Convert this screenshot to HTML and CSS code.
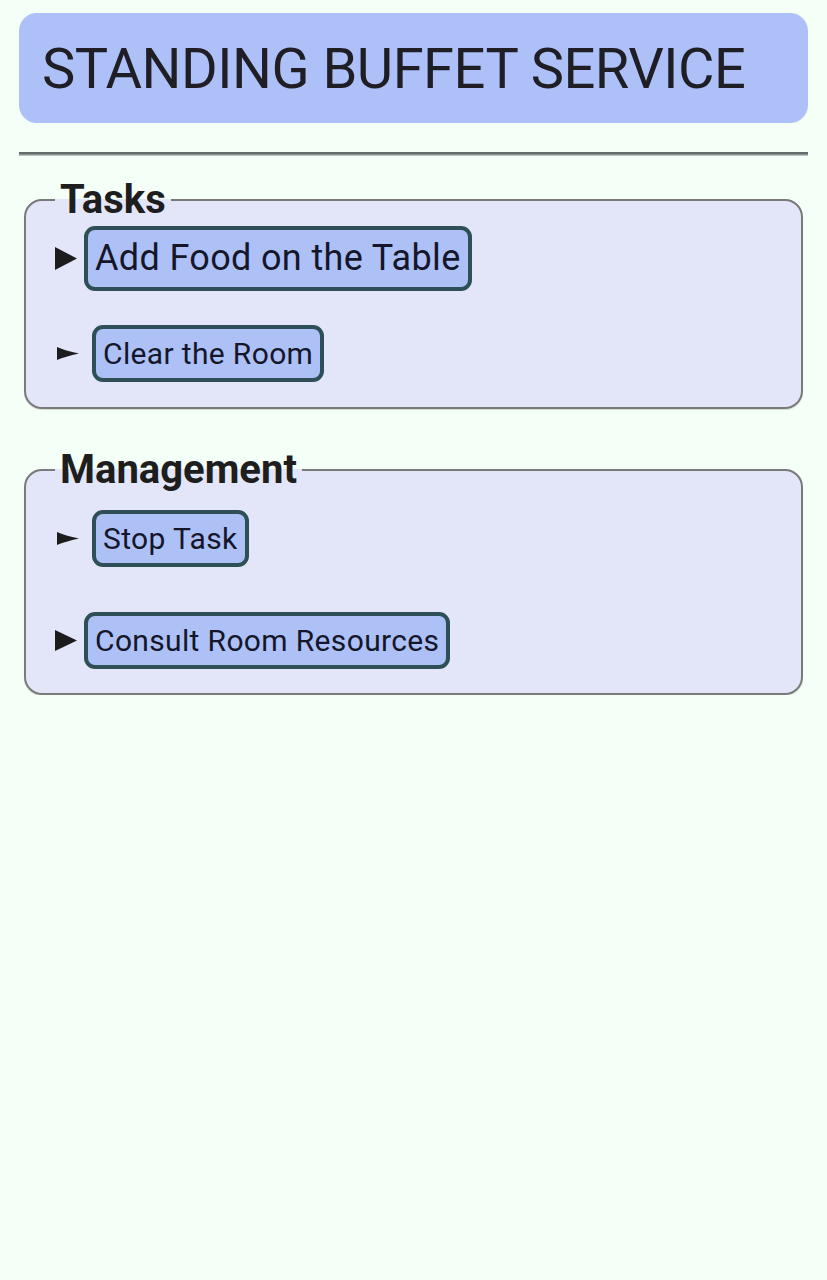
FILE: index.html
```html
<!DOCTYPE html>
<html lang="en">
<head>
<meta charset="utf-8">
<title>Standing Buffet Service</title>
<link rel="stylesheet" href="styles.css">
</head>
<body>
<header class="title-bar">
  <h1 class="title">STANDING BUFFET SERVICE</h1>
</header>
<div class="rule"></div>

<fieldset class="group group-tasks">
  <legend class="group-legend">Tasks</legend>
  <div class="item item-first-tasks">
    <svg class="marker marker-big" width="22" height="23" viewBox="0 0 22 23"><polygon points="0,0 22,11.5 0,23" fill="#1c1c1c"/></svg>
    <button class="action action-large">Add Food on the Table</button>
  </div>
  <div class="item item-second-tasks">
    <svg class="marker marker-small" width="22" height="13" viewBox="0 0 22 13"><path d="M0 0 Q8 3.5 22 6.5 Q8 9.5 0 13 Z" fill="#1c1c1c"/></svg>
    <button class="action">Clear the Room</button>
  </div>
</fieldset>

<fieldset class="group group-management">
  <legend class="group-legend">Management</legend>
  <div class="item item-first-management">
    <svg class="marker marker-small" width="22" height="13" viewBox="0 0 22 13"><path d="M0 0 Q8 3.5 22 6.5 Q8 9.5 0 13 Z" fill="#1c1c1c"/></svg>
    <button class="action">Stop Task</button>
  </div>
  <div class="item item-second-management">
    <svg class="marker marker-big" width="22" height="21" viewBox="0 0 22 21"><polygon points="0,0 22,10.5 0,21" fill="#1c1c1c"/></svg>
    <button class="action">Consult Room Resources</button>
  </div>
</fieldset>
</body>
</html>
```

FILE: styles.css
```css
html, body {
  margin: 0;
  padding: 0;
}

body {
  background: #f3fff7;
  padding: 13px 19px 0;
  font-family: Roboto, "Liberation Sans", sans-serif;
  color: #1f1f22;
}

.title-bar {
  background: #adc0f8;
  border-radius: 18px;
  padding: 23px 20px 21px 23px;
}

.title {
  margin: 0;
  font-size: 56px;
  font-weight: 400;
  line-height: normal;
  letter-spacing: -0.5px;
  color: #1e1e24;
}

.rule {
  margin-top: 29px;
  height: 1px;
  border-top: 2px solid #646d6b;
  border-bottom: 1px solid #b9c2c0;
  background: #8a9391;
}

.group {
  margin: 24px 5px 0;
  padding: 0 24px 25px 29px;
  border: 2px solid #7a7a7a;
  border-radius: 18px;
  background: #e3e6f8;
  box-shadow: 0 1px 1px rgba(0, 0, 0, 0.15);
  min-width: 0;
}

.group-management {
  margin-top: 41px;
  padding-bottom: 24px;
}

.group-legend {
  padding: 0 5px;
  font-size: 40px;
  font-weight: 700;
  line-height: 40px;
  color: #1e1e1e;
}

.item {
  display: flex;
  align-items: center;
}

.item-first-tasks { margin-top: 6px; }
.item-second-tasks { margin-top: 34px; }
.item-first-management { margin-top: 20px; }
.item-second-management { margin-top: 45px; }

.marker {
  flex: none;
  display: block;
}

.marker-big {
  margin-right: 7px;
}

.marker-small {
  margin-left: 2px;
  margin-right: 13px;
}

.action {
  font-family: Roboto, "Liberation Sans", sans-serif;
  font-size: 30px;
  line-height: 35px;
  letter-spacing: 0.35px;
  color: #15162a;
  background: #adc1f7;
  border: 4px solid #2d4f55;
  border-radius: 11px;
  padding: 7px;
  margin: 0;
}

.action-large {
  font-size: 36px;
  line-height: 42px;
  padding: 7px 7px 8px;
}
```
